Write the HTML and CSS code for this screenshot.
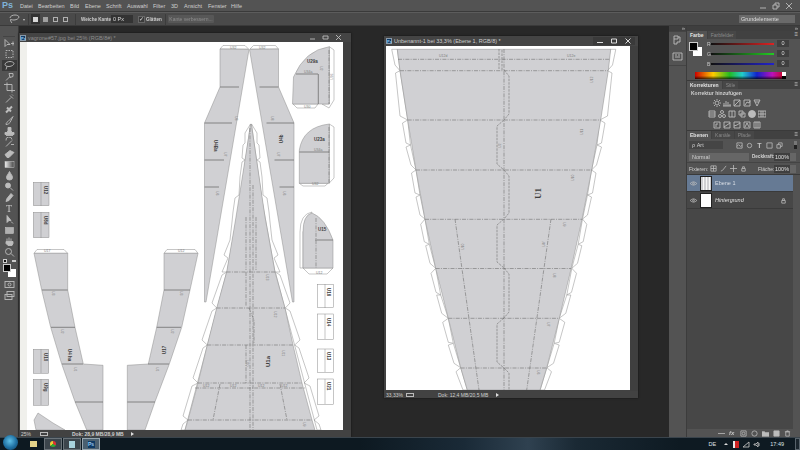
FILE: index.html
```html
<!DOCTYPE html>
<html lang="de">
<head>
<meta charset="utf-8">
<title>Photoshop</title>
<link rel="stylesheet" href="styles.css">
</head>
<body>
<div class="app">
  <header class="menubar">
    <span class="pslogo">Ps</span>
    <nav class="menus">
      <span class="m1">Datei</span><span class="m2">Bearbeiten</span><span class="m3">Bild</span><span class="m4">Ebene</span><span class="m5">Schrift</span><span class="m6">Auswahl</span><span class="m7">Filter</span><span class="m8">3D</span><span class="m9">Ansicht</span><span class="m10">Fenster</span><span>Hilfe</span>
    </nav>
    <div class="winctl">
      <svg class="ic" width="10" height="8" viewBox="0 0 10 8"><path d="M2 6h6"/></svg>
      <svg class="ic" width="10" height="8" viewBox="0 0 10 8"><path d="M2 3h4v4H2zM4 3V1h4v4H6"/></svg>
      <svg class="ic" width="10" height="8" viewBox="0 0 10 8"><path d="M2 1l6 6M8 1L2 7"/></svg>
    </div>
  </header>

  <div class="optionsbar">
    <svg class="ic lasso" width="13" height="10" viewBox="0 0 13 10"><path d="M2 4c0-2 3-3 5-3s4 1 4 2-2 3-5 3-3-1-3-1M3 5c-1 1 0 3 1 4"/></svg>
    <span class="caret"></span>
    <span class="sep"></span>
    <div class="modes">
      <span class="mode on"><i class="sq"></i></span>
      <span class="mode"><i class="sq dim"></i></span>
      <span class="mode"><i class="sq hollow"></i></span>
      <span class="mode"><i class="sq hollow dim"></i></span>
    </div>
    <span class="sep s2"></span>
    <span class="optlabel">Weiche Kante:</span>
    <span class="optinput">0 Px</span>
    <span class="check">✓</span>
    <span class="optlabel gl">Glätten</span>
    <span class="sep s3"></span>
    <span class="optbtn">Kante verbessern...</span>
    <span class="workspace-select">Grundelemente</span>
  </div>

  <div class="main">
    <aside class="tools">
      <div class="grip"></div>
      <svg class="ic tool" viewBox="0 0 11 10"><path d="M1 1v7l2-2h3zM7 5h3M9 3v4"/></svg>
      <svg class="ic tool dashed" viewBox="0 0 11 10"><path d="M2 1h7v7H2z"/></svg>
      <div class="toolon"><svg class="ic tool" viewBox="0 0 11 10"><path d="M1 4c0-2 3-3 5-3s4 1 4 2-2 3-5 3-4-1-4-2M3 6L2 9"/></svg></div>
      <svg class="ic tool" viewBox="0 0 11 10"><path d="M2 9l4-4M5 2l4 0 0 3-3 1z"/></svg>
      <svg class="ic tool" viewBox="0 0 11 10"><path d="M3 0v8h8M0 2h8v8"/></svg>
      <svg class="ic tool" viewBox="0 0 11 10"><path d="M2 9l5-5M6 2l3 3M8 1l1 1"/></svg>
      <svg class="ic tool thick" viewBox="0 0 11 10"><path d="M2 8l6-6M3 3l4 4"/></svg>
      <svg class="ic tool" viewBox="0 0 11 10"><path d="M2 9c0-2 1-2 2-3l5-5-3 6c-1 1-2 2-4 2z"/></svg>
      <svg class="ic tool solid" viewBox="0 0 11 10"><path d="M4 1h3v3l1 2h2v2H1V6h2l1-2zM2 9h7"/></svg>
      <svg class="ic tool" viewBox="0 0 11 10"><path d="M2 3a3 3 0 0 1 6-1M2 9l6-6M7 7h3"/></svg>
      <svg class="ic tool solid" viewBox="0 0 11 10"><path d="M1 6l5-4 4 2-5 5H3z"/></svg>
      <svg class="tool" viewBox="0 0 11 10"><defs><linearGradient id="gr"><stop offset="0" stop-color="#eee"/><stop offset="1" stop-color="#444"/></linearGradient></defs><rect x="1" y="2" width="9" height="6" fill="url(#gr)" class="gradbox"/></svg>
      <svg class="ic tool solid" viewBox="0 0 11 10"><path d="M5.500 1C4 4 2.500 5 2.500 7a3 2.500 0 0 0 6 0c0-2-1.500-3-3-6z"/></svg>
      <svg class="ic tool solid" viewBox="0 0 11 10"><circle cx="4" cy="4" r="2.500"/><path d="M6 6l3 3"/></svg>
      <svg class="ic tool solid" viewBox="0 0 11 10"><path d="M7 1l2 2-4 5-3 1 1-3z"/></svg>
      <div class="tooltext">T</div>
      <svg class="ic tool solid" viewBox="0 0 11 10"><path d="M3 1v7l2-2 2 0zM7 7l2 2"/></svg>
      <svg class="tool" viewBox="0 0 11 10"><rect x="1.500" y="2" width="8" height="6" class="shapebox"/></svg>
      <svg class="ic tool solid hand" viewBox="0 0 11 10"><path d="M2 5h7v2L8 9H4L2 7zM3 5V2M5 5V1M7 5V2"/></svg>
      <svg class="ic tool" viewBox="0 0 11 10"><circle cx="4.500" cy="4" r="3"/><path d="M7 6l3 3"/></svg>
      <div class="swaprow"><i class="mini"></i><i class="arrow"></i></div>
      <div class="swatches"><i class="bgs"></i><i class="fgs"></i></div>
      <svg class="ic tool qm" viewBox="0 0 11 10"><rect x="1" y="2" width="9" height="6"/><circle cx="5.500" cy="5" r="1.500"/></svg>
      <svg class="ic tool" viewBox="0 0 11 10"><rect x="3" y="1" width="7" height="5"/><rect x="1" y="4" width="7" height="5"/></svg>
    </aside>

    <main class="workspace">
      <section class="docwin win1">
        <div class="doctitle">
          <span class="psmini">Ps</span>
          <span class="doctext">vagrone#57.jpg bei 25% (RGB/8#) *</span>
          <div class="docctl">
            <svg class="ic" width="11" height="7" viewBox="0 0 11 7"><path d="M3 5h5"/></svg>
            <svg class="ic" width="11" height="7" viewBox="0 0 11 7"><path d="M3 2h5v3H3z"/></svg>
            <svg class="ic" width="11" height="7" viewBox="0 0 11 7"><path d="M3 1l5 5M8 1L3 6"/></svg>
          </div>
        </div>
        <div class="docbody">
          <svg class="art1" width="323" height="388" viewBox="20 42 323 388">
            <rect x="20" y="42" width="323" height="388" class="paper"/>
            <rect x="20" y="42" width="7" height="388" class="edge"/>

            <g id="longtop">
              <polygon class="tab" points="220,49 223,45.500 245,45.500 248.500,49"/>
              <polygon class="body" points="220,49 249,49.500 206,302 204.500,302 204.500,123 220,87"/>
              <path class="cut" d="M220 87H239M204.500 123H232M204.500 160H224M204.500 187H219"/>
            </g>
            <use href="#longtop" transform="translate(498.500,0) scale(-1,1)"/>
            <text class="lblb" transform="rotate(90 214 140)" x="214" y="140">U4Ba</text>
            <text class="lblb" transform="rotate(-90 283 143)" x="283" y="143">U4b</text>
            <text class="lbl" transform="rotate(90 235 116)" x="235" y="116">U8</text>
            <text class="lbl" transform="rotate(90 224 152)" x="224" y="152">U7</text>
            <text class="lbl" transform="rotate(90 216 191)" x="216" y="191">U6</text>
            <text class="lbl" transform="rotate(90 271 116)" x="271" y="116">U8</text>
            <text class="lbl" transform="rotate(90 277 152)" x="277" y="152">U7</text>
            <text class="lbl" transform="rotate(90 283 191)" x="283" y="191">U6</text>
            <text class="lbl" x="230" y="49">U32</text>
            <text class="lbl" x="259" y="49">U32</text>

            <g id="sidetabs">
              <path class="tab" d="M250.500 124L245 133V143L243 145 242 158 245 160 242 162 240 177 239 195 235 198 233 212 232 222 230 240 224 255 228 258 222 272 227 272 240 200z"/>
              <path class="tab" d="M226.700 272L222 275 212 303 216.700 308 212 311 202 340 207.300 345 203 348 193 378 198 383 192 386 183 416 188 420 183 424 181 430H185z"/>
            </g>
            <use href="#sidetabs" transform="translate(502,0) scale(-1,1)"/>
            <polygon class="body" points="250.700,124 236,217 226.700,272 216.700,308 207.300,345 198,383 188,420 185,430 315,430 312,420 302,383 293,345 285,308 275,272 265,217 251.300,124"/>
            <path class="fold" d="M226.700 272H275M216.700 308H285M207.300 345H293M198 383H302M195 388H305M188 420H312M250 128V430M253 185V430M246 217V270M256 217V270M220 384L213 420M280 384L287 420M246 272V306M249 308L254 320V343M246 345V383"/>
            <text class="lbl" transform="rotate(90 266 274)" x="266" y="274">U13</text>
            <text class="lbl" transform="rotate(90 274 311)" x="274" y="311">U12</text>
            <text class="lbl" transform="rotate(90 282 350)" x="282" y="350">U11</text>
            <text class="lbl" transform="rotate(90 246 360)" x="246" y="360">U10</text>
            <text class="lblb big" transform="rotate(-90 270 367)" x="270" y="367">U1a</text>
            <text class="lbl" x="203" y="387">U12</text>
            <text class="lbl" x="230" y="387">U12</text>
            <text class="lbl" x="258" y="387">U12</text>
            <text class="lbl" x="281" y="387">U12</text>
            <text class="lbl" transform="rotate(90 303 422)" x="303" y="422">U9</text>

            <polygon class="tab" points="329.300,46.700 334,50 334,100 329,108 322,104 329.300,104"/>
            <polygon class="tab" points="293,104 297,108 315,108 318,104"/>
            <path class="body" d="M292.500 104L293.500 77Q305 50 329.300 46.700V104z"/>
            <path class="cut" d="M296 74H318M318.300 74V104"/>
            <path class="fold" d="M329 50V104"/>
            <text class="lblb" x="307" y="63">U29a</text>
            <text class="lbl" x="304" y="73">U34a</text>
            <text class="lbl" transform="rotate(90 320 66)" x="320" y="66">U2</text>
            <text class="lbl" transform="rotate(-90 333 80)" x="333" y="80">U36</text>
            <text class="lbl" x="304" y="108">U30</text>

            <polygon class="tab" points="329.300,124 334,127 334,178 329,183.300"/>
            <polygon class="tab" points="299.300,183.300 303,186 325,186 328,183.300"/>
            <path class="body" d="M299.300 183.300V150Q303 127 329.300 124V183.300z"/>
            <path class="cut" d="M299.300 152H329"/>
            <path class="fold" d="M329 127V183"/>
            <text class="lblb" x="314" y="141">U23a</text>
            <text class="lbl" x="314" y="151">U34a</text>
            <text class="lbl" x="312" y="185">U32</text>

            <polygon class="tab" points="303,268 309,274 327,274 333,268"/>
            <path class="tab" d="M303 232V268H300V232Q300 214 312 212z"/>
            <path class="body" d="M303 268V232Q303 215 312 213 325 218 333 240V268z"/>
            <path class="cut" d="M315 240H333"/>
            <path class="fold" d="M316 218V268"/>
            <text class="lblb" x="318" y="231">U15</text>
            <text class="lbl" x="316" y="274">U12</text>

            <polygon class="tab" points="34,253.300 37,249.500 64,249.500 67.700,253.300"/>
            <polygon class="body" points="34,253.300 67.700,253.300 67.700,290 75,327.300 83.300,364 103,365.300 103,430 86.700,430 75,401.700 61.700,364 50.700,327.300 41.700,290"/>
            <path class="cut" d="M42 290H67.700M51 327.300H75M62 364H83M75 402H103"/>
            <text class="lblb" transform="rotate(90 68 349)" x="68" y="349">U4 ha</text>
            <text class="lbl" transform="rotate(90 52 291)" x="52" y="291">U3</text>
            <text class="lbl" transform="rotate(90 61 329)" x="61" y="329">U2</text>
            <text class="lbl" transform="rotate(90 74 367)" x="74" y="367">U1</text>
            <text class="lbl" x="44" y="252">U17</text>

            <polygon class="tab" points="164,253.300 167,249.500 195,249.500 198,253.300"/>
            <polygon class="body" points="164,253.300 198,253.300 190,290 181.700,327.300 169.300,364 155,401.700 145,430 127.300,430 127.300,365.300 148.300,364 156.700,327.300 164,290"/>
            <path class="cut" d="M164 290H190M156.700 327.300H181M148 364H169M127.300 402H155"/>
            <text class="lblb" transform="rotate(-90 166 354)" x="166" y="354">U17</text>
            <text class="lbl" transform="rotate(90 180 291)" x="180" y="291">U3</text>
            <text class="lbl" transform="rotate(90 171 329)" x="171" y="329">U2</text>
            <text class="lbl" transform="rotate(90 156 367)" x="156" y="367">U1</text>
            <text class="lbl" x="178" y="252">U12</text>

            <g class="minis">
              <rect class="body" x="33.300" y="182.300" width="15.700" height="23.400"/>
              <rect class="body" x="33.300" y="212.300" width="15.700" height="25.400"/>
              <rect class="body" x="33.300" y="349.300" width="15.400" height="24"/>
              <rect class="body" x="33.300" y="379.300" width="15.400" height="26"/>
              <path class="thin" d="M41 182V206M41 212V238M41 349V373M41 379V405"/>
            </g>
            <text class="lblb" transform="rotate(90 44 186)" x="44" y="186">U12</text>
            <text class="lblb" transform="rotate(90 44 216)" x="44" y="216">U8d</text>
            <text class="lblb" transform="rotate(90 44 353)" x="44" y="353">U10</text>
            <text class="lblb" transform="rotate(90 44 383)" x="44" y="383">U9g</text>
            <polygon class="body" points="34,420 38,413 53,423 65,430 36,430"/>

            <g class="labels">
              <rect class="tab" x="317.300" y="284.300" width="16" height="23.400"/>
              <rect class="tab" x="317.300" y="314" width="16" height="25.300"/>
              <rect class="tab" x="317.300" y="349" width="16" height="23.300"/>
              <rect class="tab" x="317.300" y="379" width="16" height="25.300"/>
              <path class="thin" d="M325 284V308M325 314V339M325 349V372M325 379V404"/>
            </g>
            <text class="lblb" transform="rotate(90 327 288)" x="327" y="288">U16</text>
            <text class="lblb" transform="rotate(90 327 318)" x="327" y="318">U14</text>
            <text class="lblb" transform="rotate(90 327 352)" x="327" y="352">U13</text>
            <text class="lblb" transform="rotate(90 327 382)" x="327" y="382">U21</text>
          </svg>
          <div class="vscroll"></div>
        </div>
        <div class="docstatus">
          <span class="zoomval">25%</span>
          <span class="stat-ic"></span>
          <span class="dok">Dok: 28,9 MB/28,9 MB</span>
          <span class="playarrow"></span>
        </div>
      </section>

      <section class="docwin win2">
        <div class="doctitle">
          <span class="psmini">Ps</span>
          <span class="doctext bright">Unbenannt-1 bei 33,3% (Ebene 1, RGB/8) *</span>
          <div class="docctl dark">
            <svg class="ic" width="12" height="8" viewBox="0 0 12 8"><path d="M3 5.500h6"/></svg>
            <svg class="ic" width="12" height="8" viewBox="0 0 12 8"><path d="M3.500 2h5v4h-5z"/></svg>
            <svg class="ic" width="12" height="8" viewBox="0 0 12 8"><path d="M3.500 1.500l5 5M8.500 1.500l-5 5"/></svg>
          </div>
        </div>
        <div class="docbody">
          <svg class="art2" width="244" height="344" viewBox="386 46 244 344">
            <rect x="386" y="46" width="244" height="344" class="paper"/>
            <g id="ftabs">
              <polygon class="tab" points="391.700,49.300 397.300,49.300 400,70.700 395,65"/>
              <polygon class="tab" points="400,70.700 395.500,73 400,116 407.700,120"/>
              <polygon class="tab" points="407.700,120 402.500,123 406,143 410.500,145"/>
              <polygon class="tab" points="410.500,145 406,147 411,165 416,170"/>
              <polygon class="tab" points="416,170 411.500,173 415,193 420,195"/>
              <polygon class="tab" points="420,195 416,197 420,215 425,219"/>
              <polygon class="tab" points="425,219 420.700,224.300 424.300,241.700 429.300,244.300"/>
              <polygon class="tab" points="429.300,244.300 425.700,245.700 430,263.300 435.700,268.300"/>
              <polygon class="tab" points="435.700,268.300 431,273.300 436,292.300 440.700,295"/>
              <polygon class="tab" points="440.700,295 436.700,295 441.700,313.300 448.300,318.300"/>
              <polygon class="tab" points="448.300,318.300 442.700,322.300 448.300,342.300 453.300,343.300"/>
              <polygon class="tab" points="453.300,343.300 448.300,345 454,363.300 460.700,367.700"/>
              <polygon class="tab" points="460.700,367.700 456,371.700 463,390 467.300,390"/>
            </g>
            <use href="#ftabs" transform="translate(1007.500,0) scale(-1,1)"/>
            <polygon class="body" points="397.300,49.300 610.700,49.300 608.300,70.700 600.700,120 591.700,170 582,219.300 571,269 559.300,318.300 546.700,368 540,390 467.300,390 460.700,367.700 448.300,318.300 435.700,268.300 425,219.300 416,170 407.700,120 400,70.700"/>
            <path class="fold" d="M398 59.300H610M400 70.700H608M407.700 120H600.700M416 170H592M425 219.300H582M435.700 268.500H571M448.300 318.300H559.300M460.700 368H546.700M504 49V390M455 219L479 390M551 219L526.700 390"/>
            <path class="fold thinfold" d="M499 49V70M502 50V70M504 70L509 76V114L504 120M504 120L497 126V164L504 170M504 170L509 176V213L504 219M504 219L497 225V262L504 268M504 268L509 274V312L504 318M504 318L497 324V362L504 368M504 368L509 373V390"/>
            <text class="lbl" x="439" y="57">U12d</text>
            <text class="lbl" x="567" y="57">U12e</text>
            <text class="lbl" transform="rotate(-90 593 83)" x="593" y="83">U12</text>
            <text class="lbl" transform="rotate(-90 583 135)" x="583" y="135">U11</text>
            <text class="lbl" transform="rotate(-90 574 181)" x="574" y="181">U10</text>
            <text class="lbl" transform="rotate(-90 501 148)" x="501" y="148">U2</text>
            <text class="lblb u1" transform="rotate(-90 541 199)" x="541" y="199">U1</text>
            <text class="lbl" transform="rotate(90 563 222)" x="563" y="222">U9</text>
            <text class="lbl" transform="rotate(-90 464 250)" x="464" y="250">U10</text>
            <text class="lbl" transform="rotate(-90 545 247)" x="545" y="247">U4f</text>
            <text class="lbl" transform="rotate(90 553 273)" x="553" y="273">U8</text>
            <text class="lbl" transform="rotate(90 547 322)" x="547" y="322">U7</text>
            <text class="lbl" transform="rotate(90 537 370)" x="537" y="370">U6</text>
          </svg>
          <div class="vscroll"></div>
        </div>
        <div class="docstatus">
          <span class="zoomval">33,33%</span>
          <span class="stat-ic"></span>
          <span class="dok">Dok: 12,4 MB/20,5 MB</span>
          <span class="playarrow"></span>
        </div>
      </section>
    </main>

    <div class="iconstrip">
      <div class="chev">»</div>
      <div class="stripsec">
        <svg class="ic" width="11" height="11" viewBox="0 0 11 11"><path d="M2 1h4v3H2zM2 4v5h3V7h3V2H6"/></svg>
        <svg class="ic" width="11" height="11" viewBox="0 0 11 11"><path d="M1 2h9v7H1zM3 4h2M6 4h2M3 6h5"/></svg>
      </div>
    </div>

    <aside class="dock">
      <div class="dockhead"><span>»</span></div>

      <section class="panel colorpanel">
        <div class="tabs"><span class="tabitem on">Farbe</span><span class="tabitem">Farbfelder</span><i class="pmenu">≡</i></div>
        <div class="colorbody">
          <div class="cswatch"><i class="cbg"></i><i class="cfg"></i></div>
          <div class="sliders">
            <div class="sl"><b>R</b><span class="track tr"></span><span class="val">0</span></div>
            <div class="sl"><b>G</b><span class="track tg"></span><span class="val">0</span></div>
            <div class="sl"><b>B</b><span class="track tb"></span><span class="val">0</span></div>
          </div>
        </div>
        <div class="spectrum"><i class="wb"></i></div>
      </section>

      <section class="panel adjust">
        <div class="tabs"><span class="tabitem on">Korrekturen</span><span class="tabitem">Stile</span><i class="pmenu">≡</i></div>
        <div class="adjtitle">Korrektur hinzufügen</div>
        <div class="adjrow">
          <svg class="ic" viewBox="0 0 8 8"><circle cx="4" cy="4" r="2"/><path d="M4 0v1M4 7v1M0 4h1M7 4h1M1 1l1 1M6 6l1 1M7 1L6 2M2 6L1 7"/></svg>
          <svg class="ic" viewBox="0 0 8 8"><path d="M0 7h8M1 7V4M3 7V2M5 7V3M7 7V5"/></svg>
          <svg class="ic" viewBox="0 0 8 8"><path d="M1 1h6v6H1zM1 7l6-6"/></svg>
          <svg class="ic" viewBox="0 0 8 8"><path d="M1 1h6v6H1zM2 6l2-3 2 1 1-2"/></svg>
          <svg class="ic" viewBox="0 0 8 8"><path d="M1 1h6L4 7zM2 3h4"/></svg>
        </div>
        <div class="adjrow">
          <svg class="ic" viewBox="0 0 8 8"><path d="M1 1h6v6H1zM1 3h6M1 5h6"/></svg>
          <svg class="ic" viewBox="0 0 8 8"><circle cx="4" cy="2" r="1.500"/><circle cx="2" cy="6" r="1.500"/><circle cx="6" cy="6" r="1.500"/></svg>
          <svg class="ic" viewBox="0 0 8 8"><path d="M1 1h6v6H1zM4 1v6"/></svg>
          <svg class="ic" viewBox="0 0 8 8"><path d="M1 1h4v4H1zM3 3h4v4H3z"/></svg>
          <svg class="ic solidfill" viewBox="0 0 8 8"><circle cx="4" cy="4" r="3.500"/></svg>
          <svg class="ic" viewBox="0 0 8 8"><path d="M0 1h8v6H0zM3 1v6M5 1v6M0 4h8"/></svg>
        </div>
        <div class="adjrow">
          <svg class="ic" viewBox="0 0 8 8"><path d="M1 1h6v6H1zM3 6V3h2"/></svg>
          <svg class="ic" viewBox="0 0 8 8"><path d="M1 1h6v6H1zM1 6l6-4"/></svg>
          <svg class="ic" viewBox="0 0 8 8"><path d="M1 1h6v6H1zM1 5l3-1 3-2"/></svg>
          <svg class="ic" viewBox="0 0 8 8"><path d="M1 1h6v6H1zM2 6l2-4 2 4"/></svg>
          <svg class="ic" viewBox="0 0 8 8"><path d="M1 1h6v6H1zM3 1v6M5 1v6"/></svg>
        </div>
      </section>

      <section class="panel layers">
        <div class="tabs"><span class="tabitem on">Ebenen</span><span class="tabitem">Kanäle</span><span class="tabitem">Pfade</span><i class="pmenu">≡</i></div>
        <div class="lrow filter">
          <span class="selbox artbox">ρ Art</span>
          <div class="lfilters">
            <svg class="ic" viewBox="0 0 8 8"><path d="M1 1h6v6H1zM1 5l2-2 2 2 2-1"/></svg>
            <svg class="ic" viewBox="0 0 8 8"><circle cx="4" cy="4" r="2.500"/></svg>
            <span class="tglyph">T</span>
            <svg class="ic" viewBox="0 0 8 8"><path d="M1 1h6v6H1z"/></svg>
            <svg class="ic" viewBox="0 0 8 8"><path d="M1 3h4v4H1zM3 3V1h4v4H5"/></svg>
          </div>
          <span class="toggle"></span>
        </div>
        <div class="lrow blend">
          <span class="selbox normal">Normal</span>
          <span class="blab">Deckkraft:</span>
          <span class="pct">100%</span><span class="pctbtn"></span>
        </div>
        <div class="lrow lock">
          <span class="blab fix">Fixieren:</span>
          <div class="locks">
            <svg class="ic" viewBox="0 0 8 8"><path d="M1 1h6v6H1zM1 4h6M4 1v6"/></svg>
            <svg class="ic" viewBox="0 0 8 8"><path d="M1 7l2-1 4-5"/></svg>
            <svg class="ic" viewBox="0 0 8 8"><path d="M4 0v8M0 4h8"/></svg>
            <svg class="ic" viewBox="0 0 8 8"><path d="M2 4h4v3H2zM3 4V2h2v2"/></svg>
          </div>
          <span class="blab fl">Fläche:</span>
          <span class="pct">100%</span><span class="pctbtn"></span>
        </div>
        <div class="layerlist">
          <div class="layer sel">
            <svg class="ic eye" viewBox="0 0 8 6"><path d="M0 3q4-4 8 0-4 4-8 0z"/><circle cx="4" cy="3" r="1"/></svg>
            <span class="thumb art"></span>
            <span class="lname">Ebene 1</span>
          </div>
          <div class="layer">
            <svg class="ic eye" viewBox="0 0 8 6"><path d="M0 3q4-4 8 0-4 4-8 0z"/><circle cx="4" cy="3" r="1"/></svg>
            <span class="thumb"></span>
            <span class="lname it">Hintergrund</span>
            <svg class="ic lockic" viewBox="0 0 8 8"><path d="M2 4h4v3H2zM3 4V2h2v2"/></svg>
          </div>
        </div>
        <div class="lfooter">
          <svg class="ic" viewBox="0 0 8 8"><path d="M0 4h8"/></svg>
          <span class="fx">fx</span>
          <svg class="ic" viewBox="0 0 8 8"><path d="M1 1h6v6H1z"/><circle cx="4" cy="4" r="1.500"/></svg>
          <svg class="ic" viewBox="0 0 8 8"><circle cx="4" cy="4" r="3"/></svg>
          <svg class="ic solidfill" viewBox="0 0 8 8"><path d="M0 2h3l1 1h4v4H0z"/></svg>
          <svg class="ic solidfill" viewBox="0 0 8 8"><path d="M1 1h6v6H1z"/></svg>
          <svg class="ic" viewBox="0 0 8 8"><path d="M2 2h4v5H2zM1 2h6M3 1h2"/></svg>
        </div>
      </section>
    </aside>
  </div>

  <footer class="taskbar">
    <span class="orb"></span>
    <span class="tb-ic folder"></span>
    <span class="tb-btn"><i class="chrome"></i></span>
    <span class="tb-btn"><i class="note"></i></span>
    <span class="tb-btn active"><i class="tbps">Ps</i></span>
    <div class="tray">
      <span class="lang">DE</span>
      <span class="up"></span>
      <span class="flag"></span>
      <svg class="ic" width="8" height="7" viewBox="0 0 8 7"><path d="M1 6h6V1z"/></svg>
      <svg class="ic" width="8" height="7" viewBox="0 0 8 7"><path d="M1 3h2l2-2v5L3 4H1zM6 2v3"/></svg>
      <span class="clock">17:49</span>
      <span class="showdesk"></span>
    </div>
  </footer>
</div>
</body>
</html>
```

FILE: styles.css
```css
* { box-sizing: border-box; }
html, body { margin: 0; padding: 0; background: #282828; }
body { width: 800px; height: 450px; overflow: hidden; font-family: "Liberation Sans", Arial, sans-serif; }
i { font-style: normal; display: block; }
.app { width: 800px; height: 450px; display: flex; flex-direction: column; color: #c4c4c4; font-size: 5.5px; filter: blur(.35px); }

.ic { fill: none; stroke: #bcbcbc; stroke-width: .9; flex: none; }
.ic.solid, .ic.solidfill { fill: #bcbcbc; }

.menubar { height: 12px; flex: none; background: #535353; border-bottom: 1px solid #3a3a3a; display: flex; align-items: center; position: relative; }
.pslogo { width: 20px; padding-left: 2px; color: #7fb3d9; font-size: 9px; font-weight: bold; line-height: 11px; }
.menus { display: flex; color: #cfcfcf; font-size: 5.5px; }
.menus span { flex: none; }
.m1 { width: 18px; } .m2 { width: 32px; } .m3 { width: 15px; } .m4 { width: 21px; } .m5 { width: 21px; } .m6 { width: 26px; } .m7 { width: 18px; } .m8 { width: 13px; } .m9 { width: 24px; } .m10 { width: 23px; }
.winctl { margin-left: auto; margin-right: 6px; display: flex; gap: 3px; }

.optionsbar { height: 14px; flex: none; background: #4a4a4a; border-top: 1px solid #5c5c5c; border-bottom: 1px solid #3a3a3a; display: flex; align-items: center; padding-left: 8px; }
.lasso { margin-right: 1px; }
.caret { width: 0; height: 0; border: 1.5px solid transparent; border-top: 2px solid #c6c6c6; margin: 2px 3px 0 1px; }
.sep { width: 1px; height: 11px; background: #3c3c3c; flex: none; margin-right: 2px; }
.modes { display: flex; gap: 1px; }
.mode { width: 9px; height: 10px; display: flex; align-items: center; justify-content: center; }
.mode.on { background: #333; }
.sq { width: 5px; height: 5px; background: #d8d8d8; }
.sq.dim { background: #a0a0a0; }
.sq.hollow { background: none; border: 1px solid #b0b0b0; }
.s2 { margin-left: 5px; margin-right: 5px; }
.optlabel { font-weight: bold; color: #cfcfcf; width: 30px; flex: none; white-space: nowrap; font-size: 4.6px; }
.optinput { width: 22px; height: 8px; background: #333; color: #ddd; padding-left: 2px; line-height: 8px; margin-right: 5px; flex: none; }
.check { width: 7px; height: 7px; background: #3a3a3a; border: 1px solid #666; color: #e0e0e0; font-size: 6px; line-height: 5px; flex: none; margin-right: 1px; }
.gl { width: 19px; }
.s3 { margin-right: 2px; }
.optbtn { width: 46px; height: 8px; background: #575757; color: #8f8f8f; line-height: 8px; text-align: center; border-radius: 1px; flex: none; font-size: 5px; white-space: nowrap; }
.workspace-select { margin-left: auto; margin-right: 5px; width: 56px; height: 8px; line-height: 8px; background: #6a6a6a; color: #ddd; padding-left: 2px; flex: none; }

.main { flex: 1; display: flex; min-height: 0; }

.tools { width: 19px; flex: none; background: #535353; border-right: 1px solid #3a3a3a; display: flex; flex-direction: column; align-items: center; padding-top: 1px; }
.grip { height: 10px; width: 12px; border-bottom: 1px solid #444; margin-bottom: 1px; flex: none; }
.tool { width: 11px; height: 11px; flex: none; }
.toolon { width: 15px; height: 11px; background: #3a3a3a; display: flex; justify-content: center; flex: none; }
.dashed path { stroke-dasharray: 1.5 1; }
.thick { stroke-width: 2; }
.hand { margin-top: 0; }
.gradbox { stroke: #ccc; stroke-width: .5; }
.shapebox { fill: #b0b0b0; stroke: #ccc; stroke-width: .5; }
.tooltext { height: 11px; font-size: 10px; line-height: 11px; font-family: "Liberation Serif", serif; color: #c8c8c8; flex: none; }
.swaprow { width: 13px; height: 6px; display: flex; justify-content: space-between; align-items: center; flex: none; }
.mini { width: 4px; height: 4px; background: #111; border: 1px solid #ccc; }
.arrow { width: 4px; height: 2px; background: #ccc; }
.swatches { width: 13px; height: 13px; position: relative; flex: none; margin-bottom: 2px; }
.bgs { position: absolute; right: 0; bottom: 0; width: 8px; height: 8px; background: #fff; }
.fgs { position: absolute; left: 0; top: 0; width: 8px; height: 8px; background: #000; border: 1px solid #ccc; }

.workspace { flex: 1; background: #282828; position: relative; min-width: 0; }
.docwin { position: absolute; display: flex; flex-direction: column; background: #424242; box-shadow: 0 0 2px #111; }
.win1 { left: 0; top: 7px; width: 332px; height: 404px; }
.win2 { left: 365px; top: 10px; width: 254px; height: 362px; }
.doctitle { height: 9px; flex: none; display: flex; align-items: center; background: #444; padding-left: 1px; }
.win2 .doctitle { height: 10px; padding-left: 2px; }
.psmini { width: 6px; height: 6px; background: #0d3a66; color: #9cc8ee; font-size: 4px; font-weight: bold; line-height: 6px; text-align: center; border: .5px solid #89a; margin-right: 2px; flex: none; }
.doctext { font-size: 5.5px; color: #8d8d8d; white-space: nowrap; }
.doctext.bright { color: #cfcfcf; }
.docctl { margin-left: auto; display: flex; margin-right: 7px; gap: 2px; }
.docctl.dark { gap: 0; margin-right: 3px; background: #3a3a3a; }
.docctl.dark .ic { stroke: #eee; width: 14px; }
.docbody { flex: 1; min-height: 0; display: flex; padding-left: 1px; }
.win2 .docbody { padding-left: 2px; }
.art1, .art2 { display: block; flex: none; }
.vscroll { flex: 1; background: #3f3f3f; }
.docstatus { height: 7px; flex: none; display: flex; align-items: center; background: #424242; font-size: 5px; color: #cfcfcf; padding-left: 2px; position: relative; }
.zoomval { width: 19px; flex: none; }
.win2 .zoomval { width: 20px; }
.stat-ic { width: 8px; height: 4px; border: 1px solid #bbb; flex: none; margin-right: 24px; }
.dok { width: 59px; flex: none; white-space: nowrap; font-weight: bold; }
.win2 .dok { width: 58px; font-weight: normal; }
.playarrow { width: 0; height: 0; border-left: 3px solid #ddd; border-top: 2px solid transparent; border-bottom: 2px solid transparent; flex: none; }

.paper { fill: #fff; }
.edge { fill: #f0f0ec; }
.body { fill: #d0d0d3; stroke: #8d8d8d; stroke-width: .5; }
.tab { fill: #fff; stroke: #8c8c8c; stroke-width: .5; }
.fold { fill: none; stroke: #707070; stroke-width: .6; stroke-dasharray: 4 1.2 1 1.2; }
.thinfold { stroke-dasharray: 2.500 1; }
.cut { fill: none; stroke: #6e6e6e; stroke-width: .8; }
.thin { fill: none; stroke: #888; stroke-width: .5; }
.lbl { font-size: 3.5px; fill: #7b7b7b; font-family: "Liberation Sans", sans-serif; }
.lblb { font-size: 4.5px; font-weight: bold; fill: #3e3e3e; font-family: "Liberation Sans", sans-serif; }
.lblb.big { font-size: 6px; }
.lblb.u1 { font-size: 9px; font-family: "Liberation Serif", serif; }

.iconstrip { width: 18px; flex: none; background: #535353; display: flex; flex-direction: column; align-items: center; border-right: 1px solid #3c3c3c; }
.chev { height: 5px; line-height: 4px; font-size: 6px; color: #bbb; width: 100%; text-align: right; padding-right: 1px; background: #3f3f3f; flex: none; }
.stripsec { width: 100%; padding: 3px 0 3px; display: flex; flex-direction: column; align-items: center; gap: 5px; border-top: 1px solid #444; border-bottom: 1px solid #444; }

.dock { width: 113px; flex: none; background: #535353; display: flex; flex-direction: column; }
.dockhead { height: 5px; flex: none; background: #3f3f3f; font-size: 6px; line-height: 4px; text-align: right; padding-right: 2px; color: #bbb; }
.panel { display: flex; flex-direction: column; border-bottom: 1px solid #3a3a3a; flex: none; }
.colorpanel { height: 50px; }
.adjust { height: 50px; }
.layers { flex: 1; border-bottom: 0; min-height: 0; }
.tabs { height: 8px; flex: none; display: flex; background: #414141; align-items: stretch; position: relative; }
.tabitem { padding: 0 3px; line-height: 8px; color: #8a8a8a; font-size: 5px; background: #474747; margin-right: 1px; white-space: nowrap; }
.tabitem.on { background: #535353; color: #e2e2e2; font-weight: bold; }
.pmenu { margin-left: auto; margin-right: 2px; line-height: 7px; font-size: 6px; color: #ccc; }

.colorbody { display: flex; padding: 1px 0 0 2px; height: 33px; }
.cswatch { width: 13px; height: 14px; position: relative; flex: none; margin: 2px 5px 0 0; }
.cbg { position: absolute; right: 0; bottom: 0; width: 9px; height: 9px; background: #fff; }
.cfg { position: absolute; left: 0; top: 0; width: 9px; height: 9px; background: #000; border: 1px solid #ccc; }
.sliders { display: flex; flex-direction: column; gap: 3px; flex: 1; }
.sl { height: 7px; display: flex; align-items: center; }
.sl b { width: 4px; font-size: 5px; font-weight: normal; margin-right: 0; }
.track { width: 63px; height: 2px; margin-right: 3px; flex: none; }
.tr { background: linear-gradient(90deg, #111, #d22); }
.tg { background: linear-gradient(90deg, #111, #2c2); }
.tb { background: linear-gradient(90deg, #111, #22c); }
.val { width: 12px; height: 7px; background: #3f3f3f; line-height: 7px; text-align: center; color: #ddd; flex: none; }
.spectrum { height: 7px; margin: 0 14px 0 8px; position: relative; flex: none; background: linear-gradient(#0000 55%, #000b), linear-gradient(90deg, #c00, #fc0 20%, #2b2 38%, #2cc 52%, #12c 68%, #b1b 85%, #c00); }
.wb { position: absolute; right: 0; top: 0; width: 4px; height: 7px; background: linear-gradient(#fff 50%, #000 50%); }

.adjtitle { height: 8px; line-height: 8px; padding-left: 4px; font-weight: bold; color: #cfcfcf; flex: none; font-size: 5px; }
.adjrow { width: 100px; height: 11px; display: flex; justify-content: center; align-items: center; gap: 2px; flex: none; }
.adjrow .ic { width: 8px; height: 8px; }

.lrow { display: flex; align-items: center; flex: none; padding-left: 2px; }
.lrow .ic { width: 7px; height: 7px; }
.filter { height: 12px; border-bottom: 0; }
.selbox { height: 8px; line-height: 8px; background: #454545; padding-left: 3px; flex: none; color: #cfcfcf; position: relative; }
.artbox { width: 34px; margin-right: 13px; }
.lfilters { display: flex; gap: 3px; align-items: center; }
.tglyph { width: 7px; font-weight: bold; font-size: 7px; line-height: 7px; text-align: center; }
.toggle { width: 3px; height: 8px; margin-left: auto; margin-right: 3px; background: linear-gradient(#777 50%, #222 50%); }
.blend { height: 12px; border-bottom: 1px solid #444; }
.normal { width: 60px; background: #666; margin-right: 3px; }
.blab { font-weight: bold; color: #d2d2d2; flex: none; width: 22px; white-space: nowrap; font-size: 4.6px; }
.pct { width: 16px; height: 8px; line-height: 8px; background: #3f3f3f; color: #e0e0e0; text-align: center; flex: none; }
.pctbtn { width: 6px; height: 8px; background: #666; flex: none; }
.lock { height: 12px; padding-left: 2px; border-bottom: 1px solid #3a3a3a; }
.fix { width: 21px; font-weight: normal; font-size: 5px; }
.locks { display: flex; gap: 3px; width: 48px; }
.fl { width: 16px; font-weight: normal; font-size: 5px; }

.layerlist { flex: 1; min-height: 0; background: #474747; margin-right: 7px; }
.layer { height: 17px; display: flex; align-items: center; border-bottom: 1px solid #3a3a3a; padding-left: 3px; position: relative; }
.layer.sel { background: #667a94; color: #d8dde4; }
.eye { width: 7px; height: 5px; margin-right: 3px; }
.thumb { width: 12px; height: 15px; background: #fff; flex: none; margin-right: 3px; border: .5px solid #222; }
.thumb.art { background: repeating-linear-gradient(90deg, #d0d0d3 0 2px, #f6f6f6 2px 3px); }
.lname { font-size: 5.5px; }
.lname.it { font-style: italic; color: #e0e0e0; }
.lockic { width: 7px; height: 7px; margin-left: auto; margin-right: 6px; }
.lfooter { height: 8px; flex: none; background: #535353; margin-right: 5px; display: flex; align-items: center; justify-content: flex-end; gap: 4px; padding-right: 4px; }
.lfooter .ic { width: 7px; height: 7px; }
.fx { width: 7px; font-style: italic; font-weight: bold; font-size: 6px; color: #c6c6c6; }

.taskbar { height: 13px; flex: none; background: linear-gradient(90deg, #0d1921 0 45%, #1a2a37 58%, #2f4150 66%, #1a2934 72%, #0e1a22 85%); border-top: 1px solid #3a444c; display: flex; align-items: center; padding-left: 3px; position: relative; }
.orb { width: 15px; height: 15px; border-radius: 50%; background: radial-gradient(circle at 45% 40%, #5fc0e8, #1e6ea0 55%, #123c5c); margin-top: -3px; flex: none; margin-right: 12px; }
.tb-ic { flex: none; }
.folder { width: 7px; height: 6px; background: #e3d28a; margin-right: 7px; }
.tb-btn { width: 18px; height: 12px; background: #3c454c; border: 1px solid #6a7278; margin-right: 1px; display: flex; align-items: center; justify-content: center; flex: none; }
.tb-btn.active { background: #4a5f6f; border-color: #97a5ae; }
.chrome { width: 6px; height: 6px; border-radius: 50%; background: conic-gradient(#d33 0 33%, #3a3 33% 66%, #ec3 66%); }
.note { width: 6px; height: 7px; background: #a9d3de; }
.tbps { width: 7px; height: 7px; background: #0d3a66; color: #9cc8ee; font-size: 5px; font-weight: bold; line-height: 7px; text-align: center; }
.tray { margin-left: auto; display: flex; align-items: center; gap: 3px; color: #dfe4e8; font-size: 5.5px; }
.lang { margin-right: 5px; }
.up { width: 0; height: 0; border: 2px solid transparent; border-bottom: 2px solid #ddd; margin: -2px 2px 0 0; }
.flag { width: 6px; height: 7px; background: linear-gradient(90deg, #e8e8e8 40%, #c22 40%); }
.clock { margin: 0 8px 0 6px; }
.showdesk { width: 5px; height: 12px; background: #1b262e; border: 1px solid #58636b; }
```
